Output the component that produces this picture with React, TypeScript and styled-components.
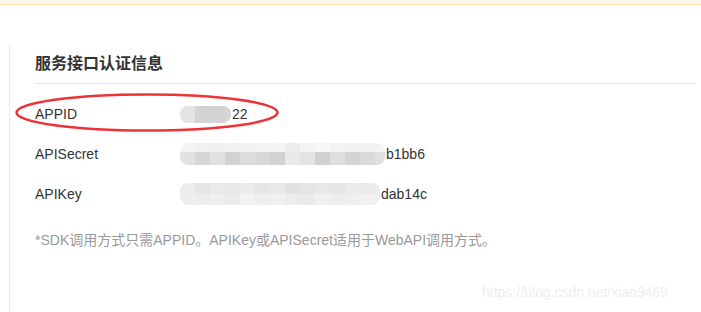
import styled, { createGlobalStyle } from "styled-components";

const Global = createGlobalStyle`
  html, body {
    margin: 0;
    padding: 0;
    background: #fff;
    font-family: "Liberation Sans", Arial, "Noto Sans CJK SC", sans-serif;
  }
`;

const Page = styled.div`
  position: relative;
  width: 701px;
  height: 312px;
  overflow: hidden;
`;

const Notice = styled.div`
  height: 4px;
  background: #fdf6ea;
  border-bottom: 1px solid #f7dfaa;
`;

const Panel = styled.section`
  margin: 39px 5px 0 9px;
  height: 268px;
  border-left: 1px solid #ebebeb;
  padding-left: 25px;
  padding-top: 8px;
`;

const Title = styled.h2`
  margin: 0;
  height: 24px;
  line-height: 24px;
  padding-bottom: 7px;
  border-bottom: 1px solid #e6e6e6;
  font-size: 16px;
  font-weight: bold;
  color: #333;
`;

const Rows = styled.div`
  margin-top: 10px;
`;

const Row = styled.div`
  display: flex;
  align-items: center;
  height: 40px;
  font-size: 14px;
  color: #333;
`;

const Label = styled.div`
  width: 145px;
  flex-shrink: 0;
`;

const Value = styled.div`
  display: flex;
  align-items: center;
`;

const Mosaic = styled.div<{ $w: number }>`
  width: ${(p) => p.$w}px;
  display: flex;
  flex-direction: column;
  border-radius: 8px;
  overflow: hidden;
  margin-right: 1px;
`;

const TileRow = styled.div<{ $h: number }>`
  display: flex;
  height: ${(p) => p.$h}px;
`;

const Tile = styled.div<{ $c: string }>`
  flex: 0 0 15px;
  background: ${(p) => p.$c};
`;

const Note = styled.p`
  margin: 16px 0 0;
  line-height: 20px;
  font-size: 14px;
  color: #999;
`;

const Ring = styled.svg`
  position: absolute;
  left: 14px;
  top: 92px;
`;

const Watermark = styled.div`
  position: absolute;
  left: 482px;
  top: 284px;
  font-size: 14px;
  color: #eeeeee;
`;

type Blur = { w: number; rows: { h: number; colors: string[] }[] };

const rows: { label: string; blur: Blur; tail: string }[] = [
  {
    label: "APPID",
    blur: {
      w: 51,
      rows: [{ h: 17, colors: ["#e6e4e2", "#d3d3d5", "#d3d3d5", "#d6d6d6"] }],
    },
    tail: "22",
  },
  {
    label: "APISecret",
    blur: {
      w: 205,
      rows: [
        {
          h: 9,
          colors: ["#f4f4f4", "#f2f2f2", "#f0f0f0", "#f2f2f2", "#f1f1f1", "#f3f3f3", "#f5f5f5", "#ececec", "#f4f4f4", "#f7f7f7", "#f3f3f3", "#f1f1f1", "#f2f2f2", "#f4f4f4"],
        },
        {
          h: 13,
          colors: ["#e2e2e2", "#d6d6d6", "#e0e0e0", "#d2d2d2", "#dcdcdc", "#d8d8d8", "#d2d2d2", "#e8e9ea", "#e4e4e4", "#d0d0d0", "#dedede", "#d4d4d4", "#dadada", "#e0e0e0"],
        },
      ],
    },
    tail: "b1bb6",
  },
  {
    label: "APIKey",
    blur: {
      w: 200,
      rows: [
        {
          h: 11,
          colors: ["#ececec", "#e6e6e6", "#eaeaea", "#e8e8e8", "#ebebeb", "#e6e6e6", "#e9e9e9", "#e2e2e2", "#e5e5e5", "#e8e8e8", "#e6e6e6", "#ebebeb", "#eaeaea", "#ececec"],
        },
        {
          h: 11,
          colors: ["#eeeeee", "#ececec", "#efefef", "#ebebeb", "#f3f3f3", "#eeeeee", "#f0f0f0", "#ececec", "#eaeaea", "#f0f0f0", "#ededed", "#efefef", "#f1f1f1", "#eeeeee"],
        },
      ],
    },
    tail: "dab14c",
  },
];

export default function App() {
  return (
    <Page>
      <Global />
      <Notice />
      <Panel>
        <Title>服务接口认证信息</Title>
        <Rows>
          {rows.map((r) => (
            <Row key={r.label}>
              <Label>{r.label}</Label>
              <Value>
                <Mosaic $w={r.blur.w}>
                  {r.blur.rows.map((tr, i) => (
                    <TileRow key={i} $h={tr.h}>
                      {tr.colors.map((c, j) => (
                        <Tile key={j} $c={c} />
                      ))}
                    </TileRow>
                  ))}
                </Mosaic>
                {r.tail}
              </Value>
            </Row>
          ))}
        </Rows>
        <Note>*SDK调用方式只需APPID。APIKey或APISecret适用于WebAPI调用方式。</Note>
      </Panel>
      <Ring width="268" height="42" viewBox="0 0 268 42">
        <ellipse cx="133" cy="20.5" rx="130.5" ry="18" fill="none" stroke="#ec3438" strokeWidth="2.5" />
      </Ring>
      <Watermark>https://blog.csdn.net/xiao9469</Watermark>
    </Page>
  );
}
